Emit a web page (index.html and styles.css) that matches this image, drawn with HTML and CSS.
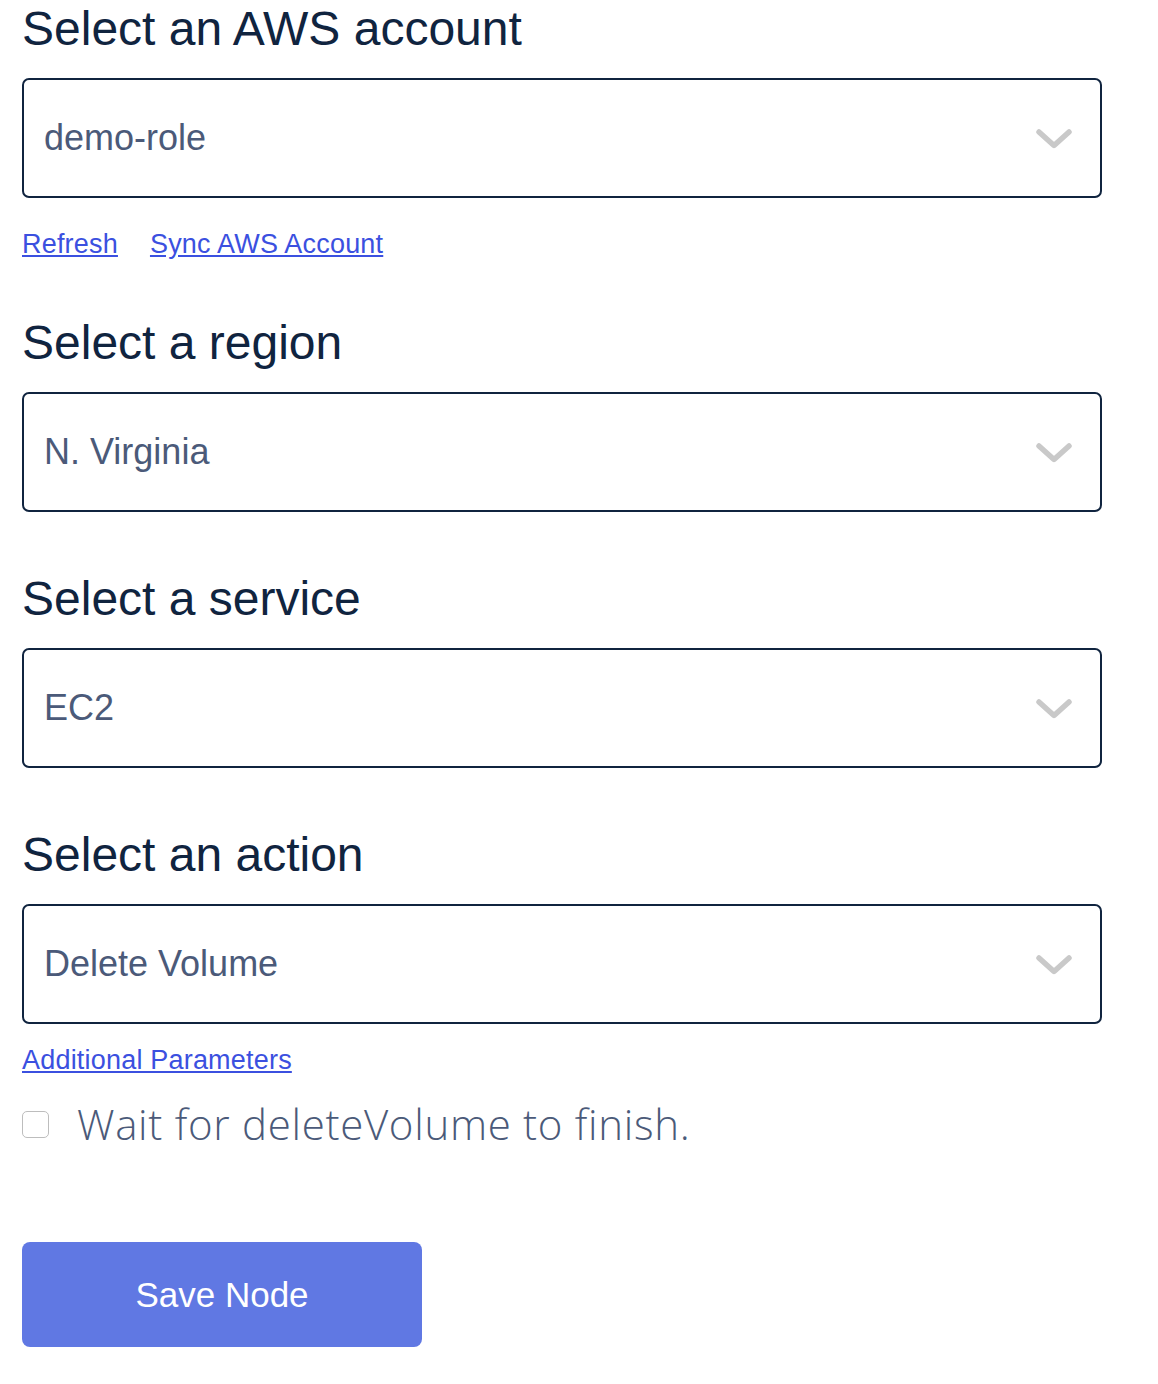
FILE: index.html
```html
<!DOCTYPE html>
<html lang="en">
<head>
<meta charset="utf-8">
<title>AWS Node</title>
<link rel="stylesheet" href="styles.css">
</head>
<body>
<main class="form">
  <section class="field first">
    <h2 class="label">Select an AWS account</h2>
    <div class="select">
      <span class="value">demo-role</span>
      <svg class="chevron" width="36" height="20" viewBox="0 0 36 20"><path d="M3 3 L18 16.5 L33 3" fill="none" stroke="#c9c9c9" stroke-width="5.5" stroke-linecap="round" stroke-linejoin="round"/></svg>
    </div>
    <div class="links">
      <a href="#" class="link">Refresh</a>
      <a href="#" class="link">Sync AWS Account</a>
    </div>
  </section>

  <section class="field">
    <h2 class="label">Select a region</h2>
    <div class="select">
      <span class="value">N. Virginia</span>
      <svg class="chevron" width="36" height="20" viewBox="0 0 36 20"><path d="M3 3 L18 16.5 L33 3" fill="none" stroke="#c9c9c9" stroke-width="5.5" stroke-linecap="round" stroke-linejoin="round"/></svg>
    </div>
  </section>

  <section class="field">
    <h2 class="label">Select a service</h2>
    <div class="select">
      <span class="value">EC2</span>
      <svg class="chevron" width="36" height="20" viewBox="0 0 36 20"><path d="M3 3 L18 16.5 L33 3" fill="none" stroke="#c9c9c9" stroke-width="5.5" stroke-linecap="round" stroke-linejoin="round"/></svg>
    </div>
  </section>

  <section class="field">
    <h2 class="label">Select an action</h2>
    <div class="select">
      <span class="value">Delete Volume</span>
      <svg class="chevron" width="36" height="20" viewBox="0 0 36 20"><path d="M3 3 L18 16.5 L33 3" fill="none" stroke="#c9c9c9" stroke-width="5.5" stroke-linecap="round" stroke-linejoin="round"/></svg>
    </div>
    <div class="links params">
      <a href="#" class="link">Additional Parameters</a>
    </div>
  </section>

  <label class="check-row">
    <span class="checkbox"></span>
    <span class="check-text">Wait for deleteVolume to finish.</span>
  </label>

  <button class="save" type="button">Save Node</button>
</main>
</body>
</html>
```

FILE: styles.css
```css
* { box-sizing: border-box; }

html, body {
  margin: 0;
  padding: 0;
  background: #ffffff;
}

body {
  font-family: "Liberation Sans", Arial, sans-serif;
  color: #10243f;
}

.form {
  display: flex;
  flex-direction: column;
  align-items: flex-start;
  padding: 0 22px;
}

.field {
  display: flex;
  flex-direction: column;
  width: 1080px;
  margin-top: 58px;
}

.field.first { margin-top: 0; }

.label {
  margin: 0 0 22px 0;
  font-size: 48px;
  line-height: 56px;
  font-weight: 400;
  color: #10243f;
  padding-top: 1px;
  height: 56px;
}

.select {
  display: flex;
  align-items: center;
  justify-content: space-between;
  height: 120px;
  width: 1080px;
  border: 2px solid #10243f;
  border-radius: 7px;
  padding: 0 28px 0 20px;
}

.value {
  font-size: 36px;
  color: #4b5a79;
}

.chevron { display: block; margin-top: 2px; }

.links {
  display: flex;
  gap: 32px;
  margin-top: 30px;
  margin-bottom: -54px;
  height: 32px;
  line-height: 32px;
}

.field.first .links { margin-bottom: -4px; }

.link {
  font-size: 27px;
  letter-spacing: 0.2px;
  color: #3b50e0;
  text-decoration: underline;
  text-underline-offset: 2px;
}

.links.params { margin-top: 20px; margin-bottom: 0; }

.check-row {
  display: flex;
  align-items: center;
  gap: 28px;
  margin-top: 22px;
  height: 52px;
}

.checkbox {
  width: 27px;
  height: 27px;
  border: 1.5px solid #bdbdbd;
  border-radius: 5px;
  background: #fff;
  flex: none;
}

.check-text {
  font-family: "Open Sans", sans-serif;
  font-weight: 300;
  font-size: 42px;
  letter-spacing: 0.7px;
  color: #4b5a79;
  line-height: 52px;
}

.save {
  margin-top: 92px;
  width: 400px;
  height: 105px;
  border: none;
  border-radius: 8px;
  background: #6078e3;
  color: #ffffff;
  font-family: "Liberation Sans", Arial, sans-serif;
  font-size: 35px;
  cursor: pointer;
}
```
